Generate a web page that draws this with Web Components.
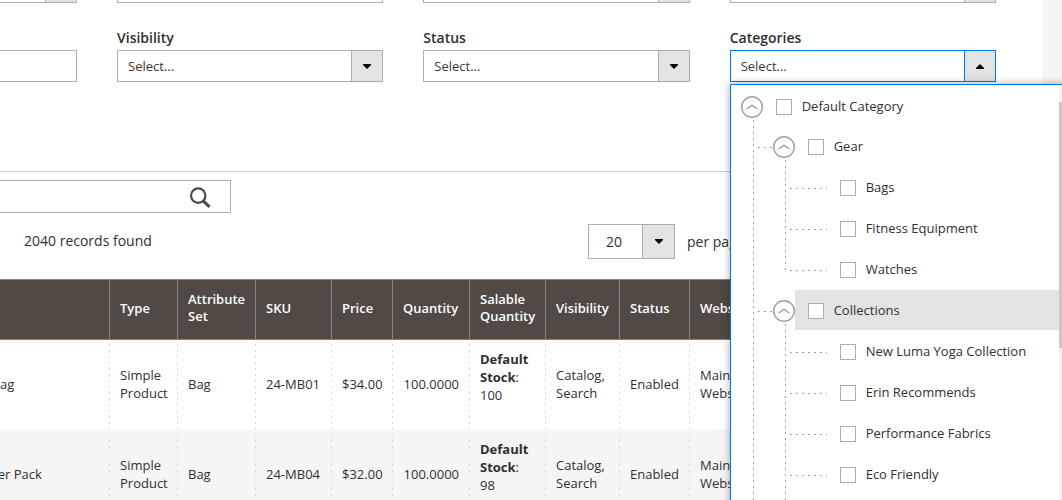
<!DOCTYPE html>
<html lang="en">
<head>
<meta charset="utf-8">
<title>Products</title>
<style>
  body { margin: 0; height: 100vh; overflow: hidden; background: #f5f5f5; color: #41362f; font: 13px/18px "Open Sans", "Noto Sans", sans-serif; }
</style>
</head>
<body>
<catalog-page></catalog-page>

<script>
const define = (name, html, setup) => customElements.define(name, class extends HTMLElement {
  constructor() {
    super();
    const t = document.createElement('template');
    t.innerHTML = html;
    this.attachShadow({ mode: 'open' }).append(t.content.cloneNode(true));
  }
  connectedCallback() { if (setup && !this.ready) { this.ready = true; setup(this, this.shadowRoot); } }
});

/* Labelled field: kind = text | select | tree */
define('filter-field', `
<style>
  :host { display: block; position: relative; min-width: 0; }
  label { display: block; height: 20px; margin-bottom: 2px; font-size: 14px; font-weight: 600; line-height: 20px; color: #303030; }
  .box { display: grid; height: 32px; }
  .box > * { grid-area: 1 / 1; }
  input, select, button { box-sizing: border-box; width: 100%; height: 32px; margin: 0; padding: 0 42px 0 10px; border: 1px solid #adadad; border-radius: 0; background: #fff; color: inherit; font: inherit; text-align: left; appearance: none; outline: 0; }
  .arrow { justify-self: end; box-sizing: border-box; width: 32px; display: grid; place-items: center; background: #e3e3e3; border: 1px solid #adadad; pointer-events: none; }
  .arrow svg { display: block; }
  :host([kind=tree]) button, :host([kind=tree]) .arrow { border-color: #007bdb; }
  :host([kind=tree]) .arrow svg { transform: rotate(180deg); }
</style>
<label for="c"></label><div class="box"></div><slot></slot>`, (el, root) => {
  const kind = el.getAttribute('kind');
  const label = root.querySelector('label');
  label.textContent = el.getAttribute('label') || '';
  const control = {
    text: '<input id="c" type="text">',
    select: '<select id="c"><option>Select...</option></select>',
    tree: '<button id="c" type="button" aria-expanded="true">Select...</button>'
  }[kind];
  root.querySelector('.box').innerHTML = control + (kind === 'text' ? '' :
    '<span class="arrow"><svg width="8" height="5" viewBox="0 0 8 5"><path d="M0 0H8V1L4 5L0 1Z" fill="#000"/></svg></span>');
});

/* Tree node: branch = has children, top = tree root, more = siblings continue below */
define('category-node', `
<style>
  :host { display: block; --dash: #a79d95; }
  :host([branch]) { background: repeating-linear-gradient(180deg, var(--dash) 0 2px, transparent 2px 6px) 22px 34px / 1px calc(100% - 53px) no-repeat; }
  :host([more]) { padding-bottom: 32px; }
  .row { display: flex; align-items: flex-start; height: 41px; }
  :host([top]) .row { height: 40px; margin-top: 1px; }
  .lead { flex: none; display: flex; align-items: flex-start; width: 32px; }
  .line { flex: none; width: 37px; height: 1px; margin: 21px 0 0 -5px; background: repeating-linear-gradient(90deg, var(--dash) 0 2px, transparent 2px 6px); }
  :host([branch]) .line { width: 15px; }
  :host([top]) .line { background: none; }
  button { flex: none; width: 22px; height: 22px; margin: 10px 0 0; padding: 0; border: 0; background: none; }
  svg { display: block; }
  .item { flex: 1; display: flex; gap: 10px; height: 40px; box-sizing: border-box; padding: 13px 0 0 13px; }
  :host([active]) .item { background: #e3e3e3; }
  input { flex: none; appearance: none; width: 16px; height: 16px; margin: 0; border: 1px solid #adadad; background: #fff; box-sizing: border-box; border-radius: 0; }
  label { line-height: 18px; margin-top: -2px; }
  .kids { margin-left: 32px; }
</style>
<div class="row"></div><div class="kids"><slot></slot></div>`, (el, root) => {
  const toggle = el.hasAttribute('branch') ? `<button type="button" aria-label="Collapse"><svg width="22" height="22" viewBox="0 0 22 22" fill="none" stroke="#a79d95"><circle cx="11" cy="11" r="10.3" stroke-width="1.4"/><path d="M5.8 13L11 9.2L16.2 13" stroke-width="1.5"/></svg></button>` : '';
  root.querySelector('.row').innerHTML =
    `<div class="lead"><span class="line"></span>${toggle}</div>
     <div class="item"><input type="checkbox" id="k"><label for="k">${el.getAttribute('label')}</label></div>`;
});

define('category-menu', `
<style>
  :host { position: absolute; z-index: 5; left: 0; top: 56px; width: 130%; height: 450px; box-sizing: border-box; border: 1px solid #007bdb; background: #fff; display: flex; overflow: hidden; box-shadow: 0 0 8px rgba(0,0,0,.35); color: #303030; }
  .list { flex: 1; }
  .bar { width: 16px; display: flex; flex-direction: column; background: #f1f1f1; padding-top: 17px; box-sizing: border-box; }
  .bar i { height: 246px; background: #c9c9c9; }
</style>
<div class="list"><slot></slot></div><div class="bar"><i></i></div>`);

define('grid-toolbar', `
<style>
  :host { display: block; border-top: 1px solid #ccc; padding-top: 8px; color: #303030; font-size: 14px; }
  .search { display: flex; box-sizing: border-box; width: 231px; height: 33px; border: 1px solid #adadad; border-left: 0; }
  .search input { flex: 1; min-width: 0; border: 0; outline: 0; padding: 0; background: none; }
  .search button { width: 41px; padding: 2px 0 0; border: 0; background: none; text-align: left; }
  svg { display: block; }
  .info { display: flex; align-items: center; margin-top: 11px; height: 35px; }
  .count { flex: none; width: 588px; box-sizing: border-box; padding: 0 0 2px 24px; }
  .pager { display: flex; align-items: center; gap: 12px; }
  .box { display: grid; width: 87px; height: 35px; }
  .box > * { grid-area: 1 / 1; }
  select { box-sizing: border-box; appearance: none; width: 87px; height: 35px; margin: 0; padding: 0 0 0 17px; border: 1px solid #adadad; border-radius: 0; background: #fff; color: inherit; font: inherit; }
  .arrow { justify-self: end; box-sizing: border-box; width: 33px; display: grid; place-items: center; background: #e3e3e3; border: 1px solid #adadad; pointer-events: none; }
</style>
<div class="search"><input type="text" aria-label="Search by keyword"><button type="button" aria-label="Search"><svg width="22" height="22" viewBox="0 0 22 22" fill="none" stroke="#514943"><circle cx="9.2" cy="8.6" r="7.2" stroke-width="2.2"/><path d="M14.2 13.8L20.5 19.8" stroke-width="3"/></svg></button></div>
<div class="info"><span class="count">2040 records found</span>
<div class="pager"><div class="box"><select id="n"><option>20</option></select><span class="arrow"><svg width="8" height="5" viewBox="0 0 8 5"><path d="M0 0H8V1L4 5L0 1Z" fill="#000"/></svg></span></div><label for="n">per page</label></div></div>`);

define('product-grid', `
<style>
  :host { display: block; margin: 20px 0 0 -98px; color: #303030; }
  table { width: 100%; table-layout: fixed; border-collapse: separate; border-spacing: 0; }
  th { box-sizing: border-box; height: 61px; padding: 0 8px 3px 10px; background: #514943; color: #fff; border: solid #8a837f; border-width: 1px 0 1px 1px; text-align: left; font-weight: 600; line-height: 17px; }
  td { height: 90px; box-sizing: border-box; padding: 0 8px 2px 11px; background: repeating-linear-gradient(180deg, transparent 0 4px, #d6d6d6 4px 6px) left / 1px 100% no-repeat; }
  td:first-child { padding-left: 16px; }
  td.stock { vertical-align: top; padding-top: 10px; }
  tr:nth-child(even) td { background-color: #f5f5f5; }
  td.num { text-align: right; padding-right: 10px; }
</style>
<table>
<colgroup><col style="width:207px"><col style="width:68px"><col style="width:78px"><col style="width:76px"><col style="width:61px"><col style="width:77px"><col style="width:76px"><col style="width:74px"><col style="width:70px"><col style="width:80px"><col></colgroup>
<thead><tr><th aria-label="Name"></th><th>Type</th><th>Attribute Set</th><th>SKU</th><th>Price</th><th>Quantity</th><th>Salable Quantity</th><th>Visibility</th><th>Status</th><th>Websites</th><th></th></tr></thead>
<tbody></tbody></table>`, (el, root) => {
  root.querySelector('tbody').innerHTML = [
    ['Joust Duffle Bag', '24-MB01', '$34.00', 100],
    ['Strive Shoulder Pack', '24-MB04', '$32.00', 98]
  ].map(([name, sku, price, n]) => `<tr><td>${name}</td><td>Simple Product</td><td>Bag</td><td>${sku}</td><td class="num">${price}</td><td class="num">100.0000</td><td class="stock"><b>Default Stock</b>: ${n}</td><td>Catalog, Search</td><td>Enabled</td><td>Main Website</td><td></td></tr>`).join('');
});

define('catalog-page', `
<style>
  :host { display: block; box-sizing: border-box; margin-right: 20px; min-height: 100vh; background: #fff; }
  .filters { display: grid; grid-template-columns: 77px 1fr 1fr 1fr; gap: 25px 40px; padding-right: 46px; margin-top: -51px; }
  .filters > :nth-child(4n+1) { margin-left: -190px; }
  grid-toolbar { margin-top: 89px; }
</style>
<div class="filters">
  <filter-field kind="select"></filter-field><filter-field kind="text"></filter-field><filter-field kind="select"></filter-field><filter-field kind="select"></filter-field>
  <filter-field kind="text"></filter-field><filter-field kind="select" label="Visibility"></filter-field><filter-field kind="select" label="Status"></filter-field>
  <filter-field kind="tree" label="Categories">
    <category-menu>
      <category-node branch top more label="Default Category">
        <category-node branch label="Gear">
          <category-node label="Bags"></category-node>
          <category-node label="Fitness Equipment"></category-node>
          <category-node label="Watches"></category-node>
        </category-node>
        <category-node branch active more label="Collections">
          <category-node label="New Luma Yoga Collection"></category-node>
          <category-node label="Erin Recommends"></category-node>
          <category-node label="Performance Fabrics"></category-node>
          <category-node label="Eco Friendly"></category-node>
        </category-node>
      </category-node>
    </category-menu>
  </filter-field>
</div>
<grid-toolbar></grid-toolbar>
<product-grid></product-grid>`);
</script>
</body>
</html>
